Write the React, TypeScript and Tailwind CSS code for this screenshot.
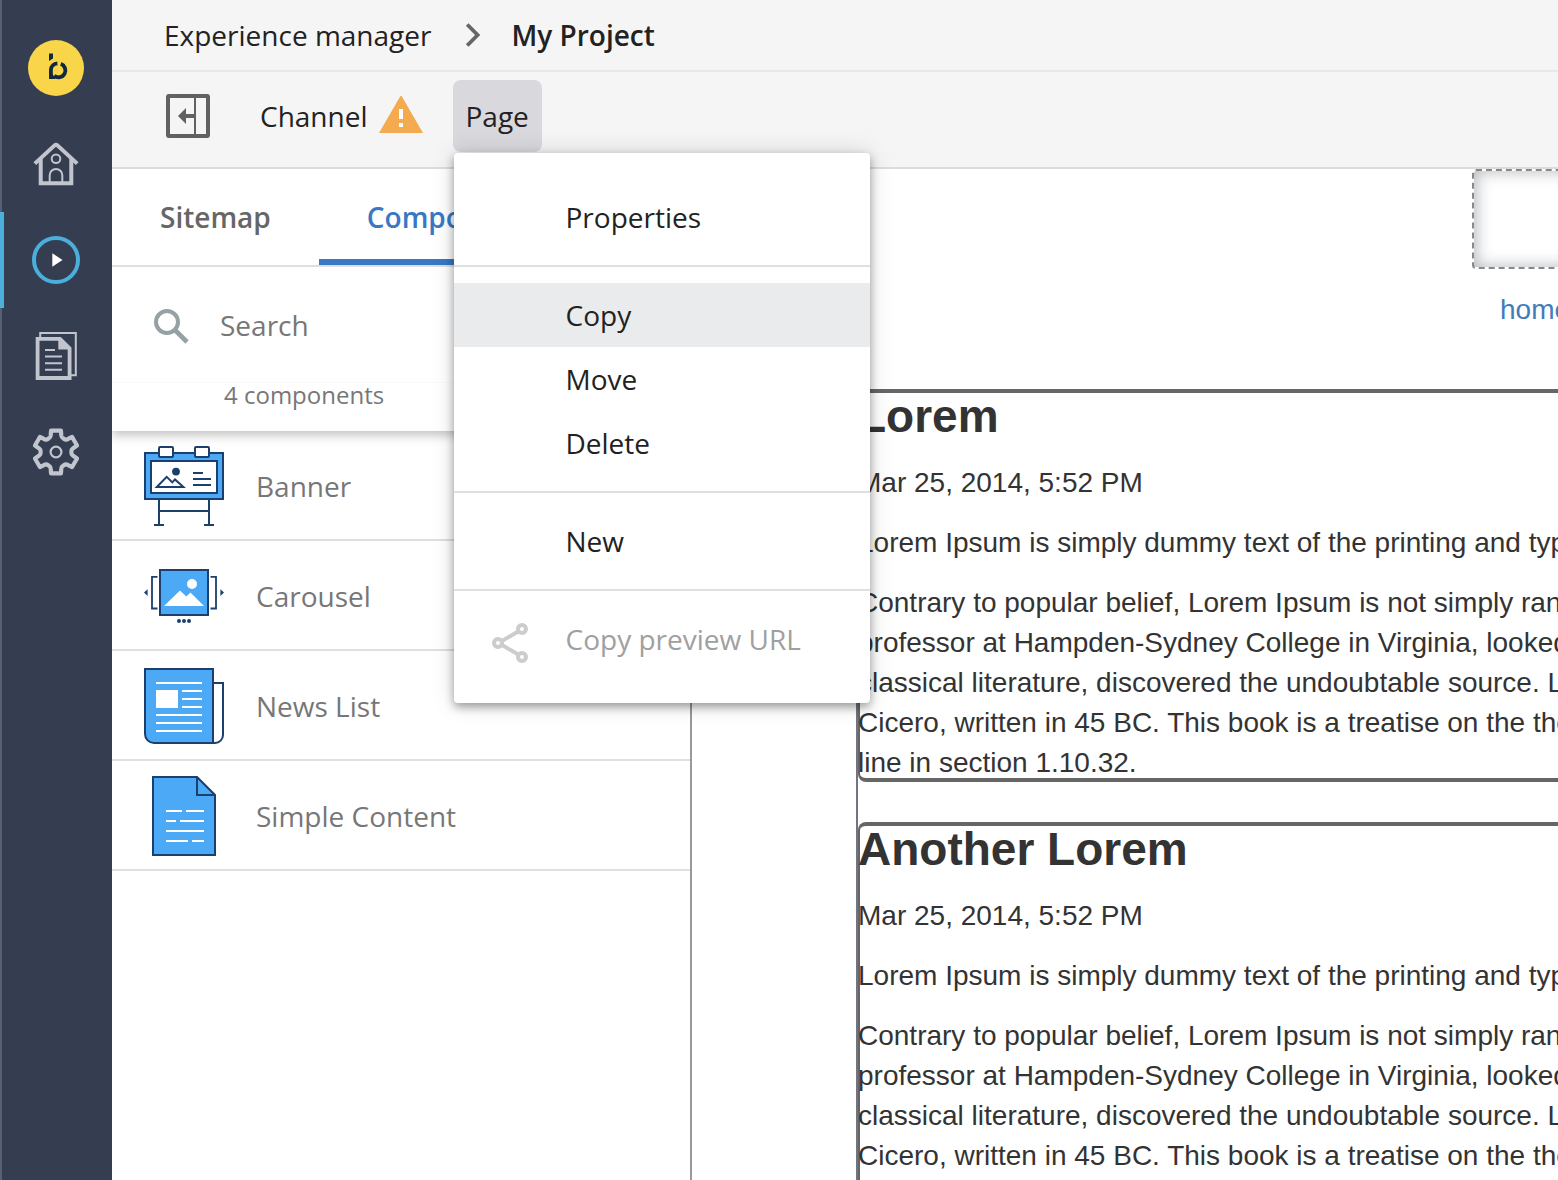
import type { ReactNode } from "react";

const NAVY = "#1b3f6f";
const BLUE = "#4ba9f5";
const GREY = "#c2c5cd";

const gearPath = (() => {
  const at = (radius: number, degrees: number) => {
    const a = (degrees * Math.PI) / 180;
    return `${(24 + radius * Math.sin(a)).toFixed(2)} ${(24 - radius * Math.cos(a)).toFixed(2)}`;
  };
  const parts: string[] = [];
  for (let k = 0; k < 6; k++) {
    const c = k * 60;
    parts.push(`${k === 0 ? "M" : "L"}${at(22, c - 13)}`);
    parts.push(`L${at(22, c + 13)}`);
    parts.push(`L${at(17.2, c + 18)}`);
    parts.push(`Q${at(15.4, c + 21)} ${at(15.4, c + 28)}`);
    parts.push(`L${at(15.4, c + 32)}`);
    parts.push(`Q${at(15.4, c + 39)} ${at(17.2, c + 42)}`);
  }
  return parts.join(" ") + "Z";
})();

function Logo() {
  return (
    <svg viewBox="0 0 56 56" className="size-14" aria-hidden="true">
      <circle cx="28" cy="28" r="28" fill="#f9d549" />
      <g fill="none" stroke="#11293d" strokeWidth="3.8">
        <path d="M21 13.4H25V18.6L21 21Z" fill="#11293d" stroke="none" />
        <path d="M32.8 23.9A6.9 6.9 0 1 1 26.2 35.8" />
        <path d="M29.4 23.3A7 7 0 0 0 22.9 30V39" />
        <path d="M21 34H24.6L27.4 39H21Z" fill="#11293d" stroke="none" />
      </g>
    </svg>
  );
}

function HomeIcon() {
  return (
    <svg viewBox="0 0 48 48" className="size-12" fill="none" stroke={GREY} aria-hidden="true">
      <path d="M2.8 23.6L22.3 5.6Q24 4 25.7 5.6L45.2 23.6" strokeWidth="4" />
      <path d="M8.7 19V43.2H39.3V19" strokeWidth="4" />
      <circle cx="24" cy="18.8" r="4.3" strokeWidth="2" />
      <path d="M17.7 43V35.2A6.3 6.3 0 0 1 30.3 35.2V43" strokeWidth="2" />
    </svg>
  );
}

function PlayIcon() {
  return (
    <svg viewBox="0 0 48 48" className="size-12" fill="none" aria-hidden="true">
      <circle cx="24" cy="24" r="22" stroke="#4bafde" strokeWidth="4" />
      <path d="M20.3 17.2L30.5 24L20.3 30.8Z" fill="#fff" />
    </svg>
  );
}

function DocumentsIcon() {
  return (
    <svg viewBox="0 0 48 48" className="size-12" fill="none" stroke={GREY} aria-hidden="true">
      <path d="M8.2 5V1H43.8V43.2H39" strokeWidth="2" />
      <path d="M5.6 6.8H28L37.6 16.4V46H5.6Z" strokeWidth="3.8" />
      <path d="M26.3 5V17.4H39.2Z" fill={GREY} stroke="none" />
      <path d="M13 18H23M13 24.6H30M13 31.2H30M13 37.8H30" strokeWidth="2" />
    </svg>
  );
}

function GearIcon() {
  return (
    <svg viewBox="0 0 48 48" className="size-12" fill="none" stroke={GREY} aria-hidden="true">
      <path d={gearPath} strokeWidth="4.2" strokeLinejoin="round" />
      <circle cx="24" cy="24" r="5.4" strokeWidth="2.2" />
    </svg>
  );
}

function BannerIcon() {
  return (
    <svg viewBox="0 0 80 80" className="size-20 shrink-0" fill="none" stroke={NAVY} strokeWidth="2" aria-hidden="true">
      <path d="M15 54V79M65 54V79M15 65H65M10 79H20M60 79H70" />
      <rect x="1" y="7" width="78" height="46" fill={BLUE} />
      <rect x="7" y="15" width="66" height="32" fill="#fff" />
      <rect x="15" y="1" width="14" height="10" rx="1" fill="#fff" />
      <rect x="51" y="1" width="14" height="10" rx="1" fill="#fff" />
      <circle cx="32" cy="25.6" r="3.9" fill={NAVY} stroke="none" />
      <path d="M12.8 41L22.7 30.8L28.3 36.4L31 33.4L39.4 41Z" />
      <path d="M49 27H59M49 33H67M49 39H67" />
    </svg>
  );
}

function CarouselIcon() {
  return (
    <svg viewBox="0 0 80 80" className="size-20 shrink-0" fill="none" stroke={NAVY} strokeWidth="2" aria-hidden="true">
      <rect x="16" y="14" width="48" height="45" fill={BLUE} />
      <circle cx="48" cy="28" r="5" fill="#fff" stroke="none" />
      <path d="M20 50L36 34.4L42.3 40.6L46.5 36.6L60 50Z" fill="#fff" stroke="none" />
      <path d="M13.5 20.8H8V52.5H13.5M66.5 20.8H72V52.5H66.5" strokeWidth="1.8" />
      <path d="M0 36.6L3.6 33.2V40ZM80 36.6L76.4 33.2V40Z" fill={NAVY} stroke="none" />
      <g fill={NAVY} stroke="none">
        <circle cx="35" cy="65" r="2" />
        <circle cx="40" cy="65" r="2" />
        <circle cx="45" cy="65" r="2" />
      </g>
    </svg>
  );
}

function NewsIcon() {
  return (
    <svg viewBox="0 0 80 80" className="size-20 shrink-0" fill="none" stroke={NAVY} strokeWidth="2" aria-hidden="true">
      <path d="M69 17H79V69A8 8 0 0 1 71 77H60" fill="#fff" />
      <path d="M1 3H69V77H10A9 9 0 0 1 1 68Z" fill={BLUE} />
      <rect x="12" y="24" width="22" height="18" fill="#fff" stroke="none" />
      <path d="M12 17H58M38 25H58M38 33H58M38 41H58M12 49H58M12 57H58M12 65H58" stroke="#fff" />
    </svg>
  );
}

function ContentIcon() {
  return (
    <svg viewBox="0 0 80 80" className="size-20 shrink-0" fill="none" stroke={NAVY} strokeWidth="2" aria-hidden="true">
      <path d="M9 1H53L71 19V79H9Z" fill={BLUE} />
      <path d="M53 1V19H71" />
      <path d="M22 35H38M42 35H60M22 45H32M36 45H60M22 55H60M22 65H44M48 65H60" stroke="#fff" />
    </svg>
  );
}

function NavButton({ label, active, children }: { label: string; active?: boolean; children: ReactNode }) {
  return (
    <button
      type="button"
      aria-label={label}
      className={
        active
          ? "relative flex h-24 w-full items-center justify-center before:absolute before:inset-y-0 before:left-0 before:w-1 before:bg-[#4bafde]"
          : "flex h-24 w-full items-center justify-center"
      }
    >
      {children}
    </button>
  );
}

function MenuItem({ label, icon, highlighted, disabled }: { label: string; icon?: ReactNode; highlighted?: boolean; disabled?: boolean }) {
  return (
    <button
      type="button"
      role="menuitem"
      disabled={disabled}
      className={
        "flex h-16 w-full items-center px-8 text-left " +
        (highlighted ? "bg-[#eaebed] " : "") +
        (disabled ? "text-[#a0a0a0]" : "text-[#222]")
      }
    >
      <span className="flex w-20 shrink-0 pt-2">{icon}</span>
      {label}
    </button>
  );
}

function Divider() {
  return <div role="separator" className="my-4 h-0.5 bg-[#dfdfdf]" />;
}

function PageMenu() {
  return (
    <div role="menu" className="absolute top-full left-0 z-20 mt-px ml-px w-[416px] rounded bg-white py-8 shadow-[0_4px_10px_rgba(0,0,0,0.35),0_0_24px_rgba(0,0,0,0.14)]">
      <MenuItem label="Properties" />
      <Divider />
      <MenuItem label="Copy" highlighted />
      <MenuItem label="Move" />
      <MenuItem label="Delete" />
      <Divider />
      <MenuItem label="New" />
      <Divider />
      <MenuItem
        label="Copy preview URL"
        disabled
        icon={
          <svg viewBox="0 0 48 48" className="size-12" fill="none" stroke="#ccc" strokeWidth="4" aria-hidden="true">
            <path d="M16 22L33 12M16 26L33 36" />
            <circle cx="36" cy="10" r="4" />
            <circle cx="12" cy="24" r="4" />
            <circle cx="36" cy="38" r="4" />
          </svg>
        }
      />
    </div>
  );
}

const components = [
  { name: "Banner", icon: <BannerIcon /> },
  { name: "Carousel", icon: <CarouselIcon /> },
  { name: "News List", icon: <NewsIcon /> },
  { name: "Simple Content", icon: <ContentIcon /> },
];

function ComponentsPanel() {
  return (
    <aside className="flex w-[580px] shrink-0 flex-col border-r-2 border-[#999] bg-white">
      <div className="z-10 shadow-[0_4px_10px_rgba(0,0,0,0.25)]">
        <div role="tablist" className="flex h-[98px] border-b-2 border-[#dfdfdf] font-semibold">
          <button type="button" role="tab" aria-selected="false" className="px-12 text-[#666]">
            Sitemap
          </button>
          <button type="button" role="tab" aria-selected="true" className="border-b-[6px] border-[#3878c5] px-12 pt-[6px] text-[#3878c5]">
            Components
          </button>
        </div>
        <div className="flex h-[116px] items-center border-b border-[#fafafa] pl-10">
          <svg viewBox="0 0 40 40" className="size-10" fill="none" stroke="#95a1a5" strokeWidth="4" aria-hidden="true">
            <circle cx="15" cy="17" r="11" />
            <path d="M23 25L35 37" strokeWidth="4.6" />
          </svg>
          <input type="text" aria-label="Search components" placeholder="Search" className="ml-7 min-w-0 flex-1 outline-none placeholder:text-[#777]" />
        </div>
        <p className="h-12 pl-28 text-2xl leading-6 text-[#777]">4 components</p>
      </div>
      <ul>
        {components.map((item) => (
          <li key={item.name} className="flex h-[110px] items-center border-b-2 border-[#dfdfdf] px-8 pt-0.5 text-[#777]">
            {item.icon}
            <span className="ml-8">{item.name}</span>
          </li>
        ))}
      </ul>
    </aside>
  );
}

const bodyLines = [
  "Contrary to popular belief, Lorem Ipsum is not simply random text.",
  "professor at Hampden-Sydney College in Virginia, looked up one",
  "classical literature, discovered the undoubtable source. Lorem",
  "Cicero, written in 45 BC. This book is a treatise on the theory",
  "line in section 1.10.32.",
];

function Article({ title }: { title: string }) {
  return (
    <article className="relative flex flex-col gap-5">
      <span aria-hidden="true" className="absolute inset-x-0 top-0 bottom-px rounded-l-lg border-y-4 border-l-2 border-[#666]" />
      <h2 className="relative pt-px text-[46px] leading-[53px] font-bold">{title}</h2>
      <p className="relative">Mar 25, 2014, 5:52 PM</p>
      <p className="relative">Lorem Ipsum is simply dummy text of the printing and typesetting industry.</p>
      <p className="relative">
        {bodyLines.map((line) => (
          <span key={line} className="block">
            {line}
          </span>
        ))}
      </p>
    </article>
  );
}

function Preview() {
  return (
    <main className="min-w-0 flex-1 overflow-hidden bg-white pl-41 font-['Liberation_Sans',Arial,sans-serif] whitespace-nowrap text-[#333]">
      <div className="flex h-[220px] flex-col items-start pl-[616px]">
        <div className="h-[100px] w-[400px] rounded border-2 border-dashed border-[#888] shadow-[inset_2px_0_16px_rgba(60,70,80,0.4)]" />
        <a href="#home" className="mt-[21px] ml-7 text-[28px] leading-10 text-[#427cb9]">
          home
        </a>
      </div>
      <div className="flex flex-col gap-[39px] border-l-2 border-[#707580] text-[28px] leading-10">
        <Article title="Lorem" />
        <Article title="Another Lorem" />
      </div>
    </main>
  );
}

export default function App() {
  return (
    <div className="flex h-screen overflow-hidden bg-white font-['Open_Sans',sans-serif] text-[28px] leading-10 text-[#222]">
      <nav aria-label="Main" className="relative z-30 w-28 shrink-0 bg-[#353d50] pt-10">
        <span aria-hidden="true" className="absolute inset-y-0 left-0 w-0.5 bg-[#586174]" />
        <div className="mb-5 flex justify-center">
          <Logo />
        </div>
        <NavButton label="Home">
          <HomeIcon />
        </NavButton>
        <NavButton label="Experience manager" active>
          <PlayIcon />
        </NavButton>
        <NavButton label="Content">
          <DocumentsIcon />
        </NavButton>
        <NavButton label="Settings">
          <GearIcon />
        </NavButton>
      </nav>
      <div className="flex min-w-0 flex-1 flex-col">
        <header className="relative z-20 bg-[#f5f5f5]">
          <div className="flex h-18 items-center border-b-2 border-[#e8e8e8] pl-13">
            <a href="#experience-manager">Experience manager</a>
            <svg viewBox="0 0 24 24" className="mx-7 size-6" fill="none" stroke="#666" strokeWidth="3.8" aria-hidden="true">
              <path d="M8.2 1.5L18.6 12L8.2 22.5" />
            </svg>
            <span className="font-semibold">My Project</span>
          </div>
          <div className="flex h-[97px] items-start border-b-2 border-[#dcdcdc] pt-2 pl-13">
            <button type="button" aria-label="Collapse panel" className="flex h-18 items-center">
              <svg viewBox="0 0 48 48" className="size-12" fill="none" stroke="#616161" aria-hidden="true">
                <rect x="4" y="4" width="40" height="40" rx="1" strokeWidth="4" />
                <path d="M31 4V44" strokeWidth="2" />
                <path d="M20 24H31" strokeWidth="4" />
                <path d="M14 24L22 16V32Z" fill="#616161" stroke="none" />
              </svg>
            </button>
            <button type="button" className="ml-12 flex h-18 items-center gap-[11px]">
              Channel
              <svg viewBox="0 0 44 40" className="h-10 w-11" aria-hidden="true">
                <path d="M22 -1L44 37H0Z" fill="#f4aa4f" />
                <path d="M20 13H24V23H20ZM20 27H24V31H20Z" fill="#fff" />
              </svg>
            </button>
            <div className="relative ml-[30px]">
              <button type="button" aria-haspopup="menu" aria-expanded="true" className="h-18 rounded-lg bg-[#d9d8dd] px-[13px]">
                Page
              </button>
              <PageMenu />
            </div>
          </div>
        </header>
        <div className="flex min-h-0 flex-1">
          <ComponentsPanel />
          <Preview />
        </div>
      </div>
    </div>
  );
}
